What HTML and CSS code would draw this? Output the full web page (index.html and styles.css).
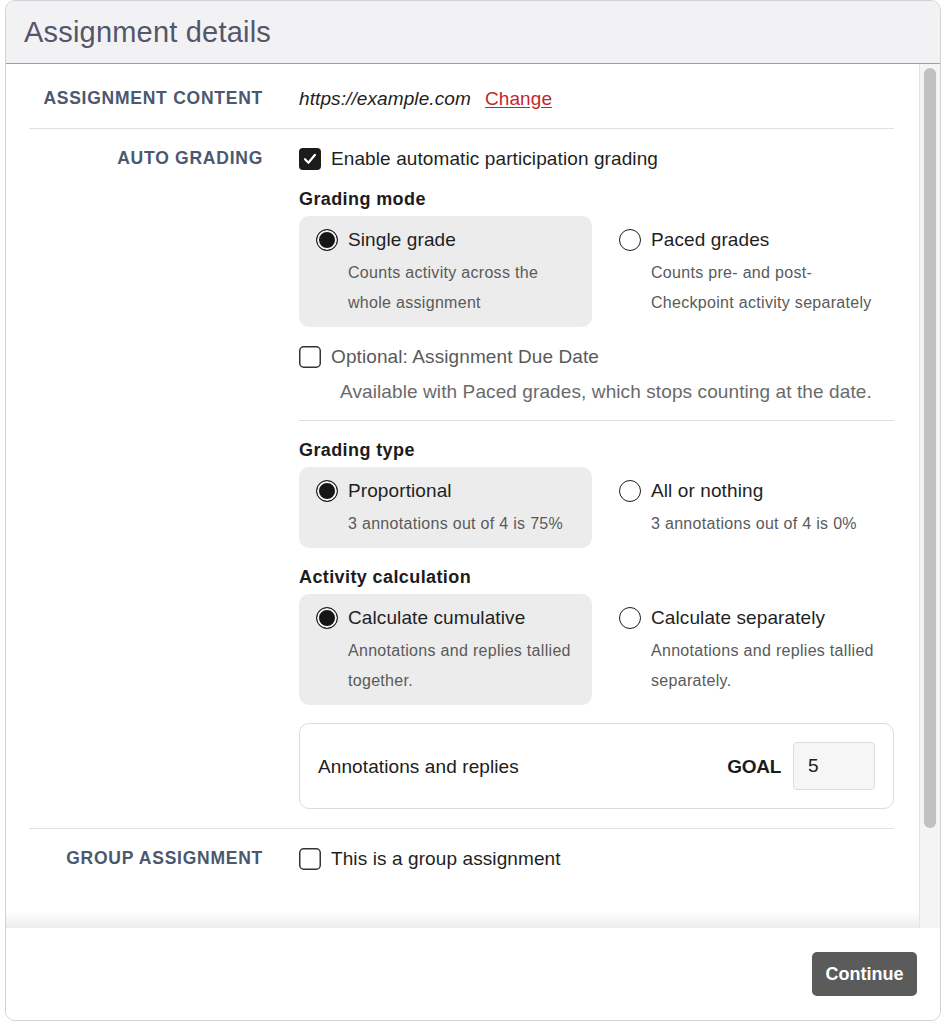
FILE: index.html
```html
<!DOCTYPE html>
<html lang="en">
<head>
<meta charset="utf-8">
<title>Assignment details</title>
<link rel="stylesheet" href="styles.css">
</head>
<body>
<div class="modal">
  <header class="modal-header">
    <h1 class="modal-title">Assignment details</h1>
  </header>
  <div class="body-wrap">
    <div class="scroll">
      <div class="content">
        <section class="row">
          <div class="row-label">Assignment content</div>
          <div class="row-value">
            <div class="line"><span class="url">https://example.com</span><a class="change" href="#">Change</a></div>
          </div>
        </section>

        <section class="row">
          <div class="row-label">Auto grading</div>
          <div class="row-value">
            <label class="check-line">
              <svg class="box" viewBox="0 0 22 22" width="22" height="22"><rect x="0" y="0" width="22" height="22" rx="4" fill="#1c1c1c"/><path d="M6 11.2 L9.4 14.8 L16 6.8" fill="none" stroke="#fff" stroke-width="2.2" stroke-linecap="round" stroke-linejoin="round"/></svg>
              <span>Enable automatic participation grading</span>
            </label>

            <div class="group-title">Grading mode</div>
            <div class="options">
              <div class="option selected">
                <div class="opt-head"><span class="radio on"></span><span>Single grade</span></div>
                <div class="opt-desc">Counts activity across the whole assignment</div>
              </div>
              <div class="option">
                <div class="opt-head"><span class="radio"></span><span>Paced grades</span></div>
                <div class="opt-desc">Counts pre- and post-Checkpoint activity separately</div>
              </div>
            </div>

            <label class="check-line muted-check">
              <svg class="box" viewBox="0 0 22 22" width="22" height="22"><rect x="0.75" y="0.75" width="20.5" height="20.5" rx="4" fill="#fff" stroke="#333" stroke-width="1.5"/></svg>
              <span>Optional: Assignment Due Date</span>
            </label>
            <div class="due-hint">Available with Paced grades, which stops counting at the date.</div>

            <hr class="inner-rule">

            <div class="group-title first">Grading type</div>
            <div class="options">
              <div class="option selected">
                <div class="opt-head"><span class="radio on"></span><span>Proportional</span></div>
                <div class="opt-desc">3 annotations out of 4 is 75%</div>
              </div>
              <div class="option">
                <div class="opt-head"><span class="radio"></span><span>All or nothing</span></div>
                <div class="opt-desc">3 annotations out of 4 is 0%</div>
              </div>
            </div>

            <div class="group-title spaced">Activity calculation</div>
            <div class="options">
              <div class="option selected">
                <div class="opt-head"><span class="radio on"></span><span>Calculate cumulative</span></div>
                <div class="opt-desc">Annotations and replies tallied together.</div>
              </div>
              <div class="option">
                <div class="opt-head"><span class="radio"></span><span>Calculate separately</span></div>
                <div class="opt-desc">Annotations and replies tallied separately.</div>
              </div>
            </div>

            <div class="goal-box">
              <span class="goal-name">Annotations and replies</span>
              <span class="goal-label">GOAL</span>
              <input class="goal-input" type="text" value="5">
            </div>
          </div>
        </section>

        <section class="row last">
          <div class="row-label">Group assignment</div>
          <div class="row-value">
            <label class="check-line">
              <svg class="box" viewBox="0 0 22 22" width="22" height="22"><rect x="0.75" y="0.75" width="20.5" height="20.5" rx="4" fill="#fff" stroke="#333" stroke-width="1.5"/></svg>
              <span>This is a group assignment</span>
            </label>
          </div>
        </section>
      </div>
      <div class="scroll-shade"></div>
    </div>
    <div class="scrollbar"><div class="thumb"></div></div>
  </div>
  <footer class="modal-footer">
    <button class="btn-continue" type="button">Continue</button>
  </footer>
</div>
</body>
</html>
```

FILE: styles.css
```css
* { box-sizing: border-box; }

html, body {
  margin: 0;
  padding: 0;
  background: #ffffff;
}

body {
  font-family: "Liberation Sans", Arial, Helvetica, sans-serif;
  color: #202020;
  width: 949px;
  height: 1024px;
  overflow: hidden;
}

.modal {
  margin: 0 8px 0 5px;
  width: 936px;
  height: 1021px;
  border: 1px solid #d2d2d2;
  border-radius: 10px;
  overflow: hidden;
  display: flex;
  flex-direction: column;
  background: #fff;
}

.modal-header {
  height: 63px;
  flex: none;
  background: #f2f2f4;
  border-bottom: 1px solid #9e9db3;
  display: flex;
  align-items: center;
  padding-left: 18px;
}

.modal-title {
  margin: 0;
  font-size: 29px;
  font-weight: 400;
  letter-spacing: 0.2px;
  color: #55556b;
  line-height: 34px;
}

.body-wrap {
  height: 864px;
  flex: none;
  display: flex;
}

.scroll {
  position: relative;
  flex: 1;
  overflow: hidden;
}

.scrollbar {
  flex: none;
  width: 21px;
  background: #f4f4f4;
  border-left: 1px solid #e4e4e4;
  padding: 4px 4px 0 4px;
}

.thumb {
  width: 12px;
  height: 760px;
  border-radius: 6px;
  background: #c1c1c1;
}

.scroll-shade {
  position: absolute;
  left: 0;
  right: 0;
  bottom: 0;
  height: 16px;
  background: linear-gradient(to bottom, rgba(0,0,0,0), rgba(0,0,0,0.08));
  pointer-events: none;
}

.content {
  padding: 5px 25px 150px 23px;
}

.row {
  display: grid;
  grid-template-columns: 234px 595px;
  column-gap: 36px;
  padding: 16px 0;
  border-bottom: 1px solid #e1e1e1;
}

.row.last {
  border-bottom: none;
}

.row:nth-child(2) {
  padding-bottom: 19px;
}

.row-label {
  text-align: right;
  text-transform: uppercase;
  font-size: 17.5px;
  font-weight: 700;
  color: #4b586f;
  line-height: 27px;
  letter-spacing: 0.75px;
}

.row-value {
  font-size: 19px;
  line-height: 27px;
  letter-spacing: 0.1px;
}

.line {
  display: flex;
  align-items: center;
  gap: 14px;
}

.url {
  font-style: italic;
  color: #1e1e1e;
}

.change {
  color: #c2272f;
  text-decoration: underline;
  text-underline-offset: 2px;
}

.check-line {
  display: flex;
  align-items: center;
  gap: 10px;
  height: 27px;
  color: #1f1f1f;
}

.check-line .box {
  flex: none;
  display: block;
}

.muted-check {
  margin-top: 16px;
  color: #595959;
}

.due-hint {
  margin-top: 8px;
  padding-left: 41px;
  color: #6a6a6a;
}

.inner-rule {
  border: none;
  border-top: 1px solid #dedede;
  margin: 15px 0 0;
  height: 0;
}

.group-title {
  margin-top: 14px;
  font-size: 18px;
  font-weight: 700;
  letter-spacing: 0.4px;
  color: #1c1c1c;
  line-height: 27px;
}

.group-title.first,
.group-title.spaced {
  margin-top: 16px;
}

.options {
  margin-top: 3px;
  display: grid;
  grid-template-columns: 293px 293px;
  column-gap: 10px;
}

.option {
  border-radius: 10px;
  padding: 10px 10px 9px 17px;
}

.option.selected {
  background: #ececec;
}

.opt-head {
  display: flex;
  align-items: center;
  gap: 10px;
  height: 27px;
  color: #1f1f1f;
}

.radio {
  flex: none;
  width: 22px;
  height: 22px;
  border-radius: 50%;
  border: 1.5px solid #1c1c1c;
  background: #fff;
}

.radio.on {
  background: #161616;
  box-shadow: inset 0 0 0 2px #f4f4f4;
}

.opt-desc {
  margin-top: 5px;
  padding-left: 32px;
  font-size: 16px;
  letter-spacing: 0.3px;
  line-height: 30px;
  color: #5a5a5a;
}

.goal-box {
  margin-top: 18px;
  border: 1px solid #dcdcdc;
  border-radius: 10px;
  padding: 18px 18px;
  display: flex;
  align-items: center;
}

.goal-name {
  flex: 1;
  color: #202020;
}

.goal-label {
  font-weight: 700;
  color: #1c1c1c;
  margin-right: 12px;
  letter-spacing: -0.3px;
}

.goal-input {
  width: 82px;
  height: 48px;
  border: 1px solid #dcdcdc;
  border-radius: 4px;
  background: #f6f6f6;
  font-family: "Liberation Sans", Arial, sans-serif;
  font-size: 19px;
  color: #202020;
  padding: 0 0 0 14px;
  outline: none;
}

.modal-footer {
  flex: 1;
  display: flex;
  justify-content: flex-end;
  align-items: flex-start;
  padding: 24px 23px 0 0;
  background: #fff;
}

.btn-continue {
  width: 105px;
  height: 44px;
  border: none;
  border-radius: 5px;
  background: #5b5b5b;
  color: #ffffff;
  font-family: "Liberation Sans", Arial, sans-serif;
  font-size: 18px;
  font-weight: 700;
  cursor: pointer;
}
```
